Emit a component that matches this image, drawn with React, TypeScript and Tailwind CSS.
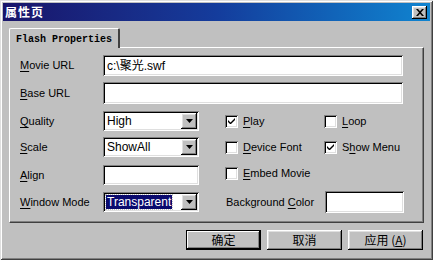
import React from 'react';

const ui = { fontFamily: '"Liberation Sans", Arial, "Noto Sans CJK SC", sans-serif' };
const cjk = { fontFamily: '"Noto Sans CJK SC", "Liberation Sans", sans-serif' };

const sunken =
  'bg-white shadow-[inset_1px_1px_#808080,inset_-1px_-1px_#ffffff,inset_2px_2px_#000000,inset_-2px_-2px_#dfdfdf]';
const raised =
  'bg-[#c0c0c0] shadow-[inset_-1px_-1px_#000000,inset_1px_1px_#ffffff,inset_-2px_-2px_#808080,inset_2px_2px_#dfdfdf]';

function Key({ children }: { children: React.ReactNode }) {
  return <span className="underline underline-offset-2">{children}</span>;
}

function Label({ children }: { children: React.ReactNode }) {
  return <div className="w-[83px] shrink-0 text-[11px] text-black">{children}</div>;
}

function TextBox({ value, className }: { value?: string; className: string }) {
  return (
    <div className={`${sunken} ${className} flex items-center px-[4px] text-[12px] text-black`}>
      {value}
    </div>
  );
}

function Select({ value, selected }: { value: string; selected?: boolean }) {
  return (
    <div className={`${sunken} w-[96px] h-[20px] flex items-center p-[2px]`}>
      <div className="flex-1 flex items-center h-full pl-[1px]">
        <span
          className={`text-[12px] leading-[14px] px-[1px] ${
            selected ? 'bg-[#0a0a6e] text-white outline outline-1 outline-dotted outline-[#c0c0c0]' : 'text-black'
          }`}
        >
          {value}
        </span>
      </div>
      <div className={`${raised} w-[16px] h-full flex items-center justify-center`}>
        <svg width="7" height="4" viewBox="0 0 7 4">
          <path d="M0 0h7L3.5 4z" fill="#000" />
        </svg>
      </div>
    </div>
  );
}

function Check({ checked, children, width }: { checked?: boolean; children: React.ReactNode; width: string }) {
  return (
    <div className={`flex items-center ${width}`}>
      <div className={`${sunken} w-[13px] h-[13px] flex items-center justify-center shrink-0`}>
        {checked && (
          <svg width="7" height="7" viewBox="0 0 7 7">
            <path d="M0 2v2l2 2h1l4-4V0L2.5 4.5z" fill="#000" />
          </svg>
        )}
      </div>
      <span className="ml-[5px] text-[11px] text-black">{children}</span>
    </div>
  );
}

function Button({ children, isDefault }: { children: React.ReactNode; isDefault?: boolean }) {
  return (
    <div
      className={`w-[75px] h-[20px] flex items-center justify-center text-[12px] text-black ${
        isDefault
          ? 'bg-[#c0c0c0] shadow-[inset_0_0_0_1px_#000000,inset_-2px_-2px_#000000,inset_2px_2px_#ffffff,inset_-3px_-3px_#808080]'
          : raised
      }`}
      style={cjk}
    >
      {children}
    </div>
  );
}

export default function App() {
  return (
    <div
      className="w-[433px] h-[260px] bg-[#c0c0c0] p-[3px] flex flex-col shadow-[inset_1px_1px_#dfdfdf,inset_-1px_-1px_#404040,inset_2px_2px_#ffffff,inset_-2px_-2px_#808080]"
      style={ui}
    >
      {/* title bar */}
      <div className="h-[18px] shrink-0 flex items-center justify-between bg-gradient-to-r from-[#18146a] via-[#143c9c] to-[#1084d0] pl-[2px] pr-[3px]">
        <span className="text-white text-[12px] font-bold tracking-[1px]" style={cjk}>
          属性页
        </span>
        <div className={`${raised} w-[15px] h-[13px] flex items-center justify-center`}>
          <svg width="8" height="7" viewBox="0 0 8 7">
            <path d="M0 0h2l2 2.2L6 0h2L5 3.5 8 7H6L4 4.8 2 7H0l3-3.5z" fill="#000" />
          </svg>
        </div>
      </div>

      <div className="px-[6px] pt-[7px] flex flex-col flex-1">
        {/* tab */}
        <div className="flex h-[19px] shrink-0">
          <div className="relative z-10 w-[111px] h-[20px] bg-[#c0c0c0] rounded-t-[2px] border-l border-t border-white border-r-2 border-r-[#404040] flex items-center justify-center">
            <span
              className="text-[10px] font-bold text-black pt-[1px]"
              style={{ fontFamily: '"Liberation Mono", "Courier New", monospace' }}
            >
              Flash Properties
            </span>
          </div>
        </div>

        {/* panel */}
        <div className="h-[176px] shrink-0 border-l border-t border-white border-r border-b border-r-[#404040] border-b-[#404040] shadow-[inset_-1px_-1px_#808080] pl-[10px] pt-[7px]">
          <div className="flex items-center h-[21px]">
            <Label>
              <Key>M</Key>ovie URL
            </Label>
            <TextBox value="c:\聚光.swf" className="w-[300px] h-[21px]" />
          </div>
          <div className="flex items-center h-[22px] mt-[6px]">
            <Label>
              <Key>B</Key>ase URL
            </Label>
            <TextBox className="w-[300px] h-[22px]" />
          </div>

          <div className="flex items-center h-[20px] mt-[7px]">
            <Label>
              <Key>Q</Key>uality
            </Label>
            <Select value="High" />
            <div className="ml-[26px] flex">
              <Check checked width="w-[99px]">
                <Key>P</Key>lay
              </Check>
              <Check width="w-[80px]">
                <Key>L</Key>oop
              </Check>
            </div>
          </div>

          <div className="flex items-center h-[20px] mt-[6px]">
            <Label>
              <Key>S</Key>cale
            </Label>
            <Select value="ShowAll" />
            <div className="ml-[26px] flex">
              <Check width="w-[99px]">
                <Key>D</Key>evice Font
              </Check>
              <Check checked width="w-[80px]">
                S<Key>h</Key>ow Menu
              </Check>
            </div>
          </div>

          <div className="flex items-center h-[20px] mt-[8px]">
            <Label>
              <Key>A</Key>lign
            </Label>
            <TextBox className="w-[96px] h-[20px]" />
            <div className="ml-[26px] flex -mt-[4px]">
              <Check width="w-[99px]">
                <Key>E</Key>mbed Movie
              </Check>
            </div>
          </div>

          <div className="flex items-center h-[22px] mt-[6px]">
            <Label>
              <Key>W</Key>indow Mode
            </Label>
            <Select value="Transparent" selected />
            <div className="ml-[27px] w-[99px] text-[11px] text-black">
              Background <Key>C</Key>olor
            </div>
            <TextBox className="w-[79px] h-[22px]" />
          </div>
        </div>

        {/* buttons */}
        <div className="flex justify-end gap-[6px] mt-[7px] pr-[1px]">
          <Button isDefault>确定</Button>
          <Button>取消</Button>
          <Button>
            应用 (<span className="underline">A</span>)
          </Button>
        </div>
      </div>
    </div>
  );
}
